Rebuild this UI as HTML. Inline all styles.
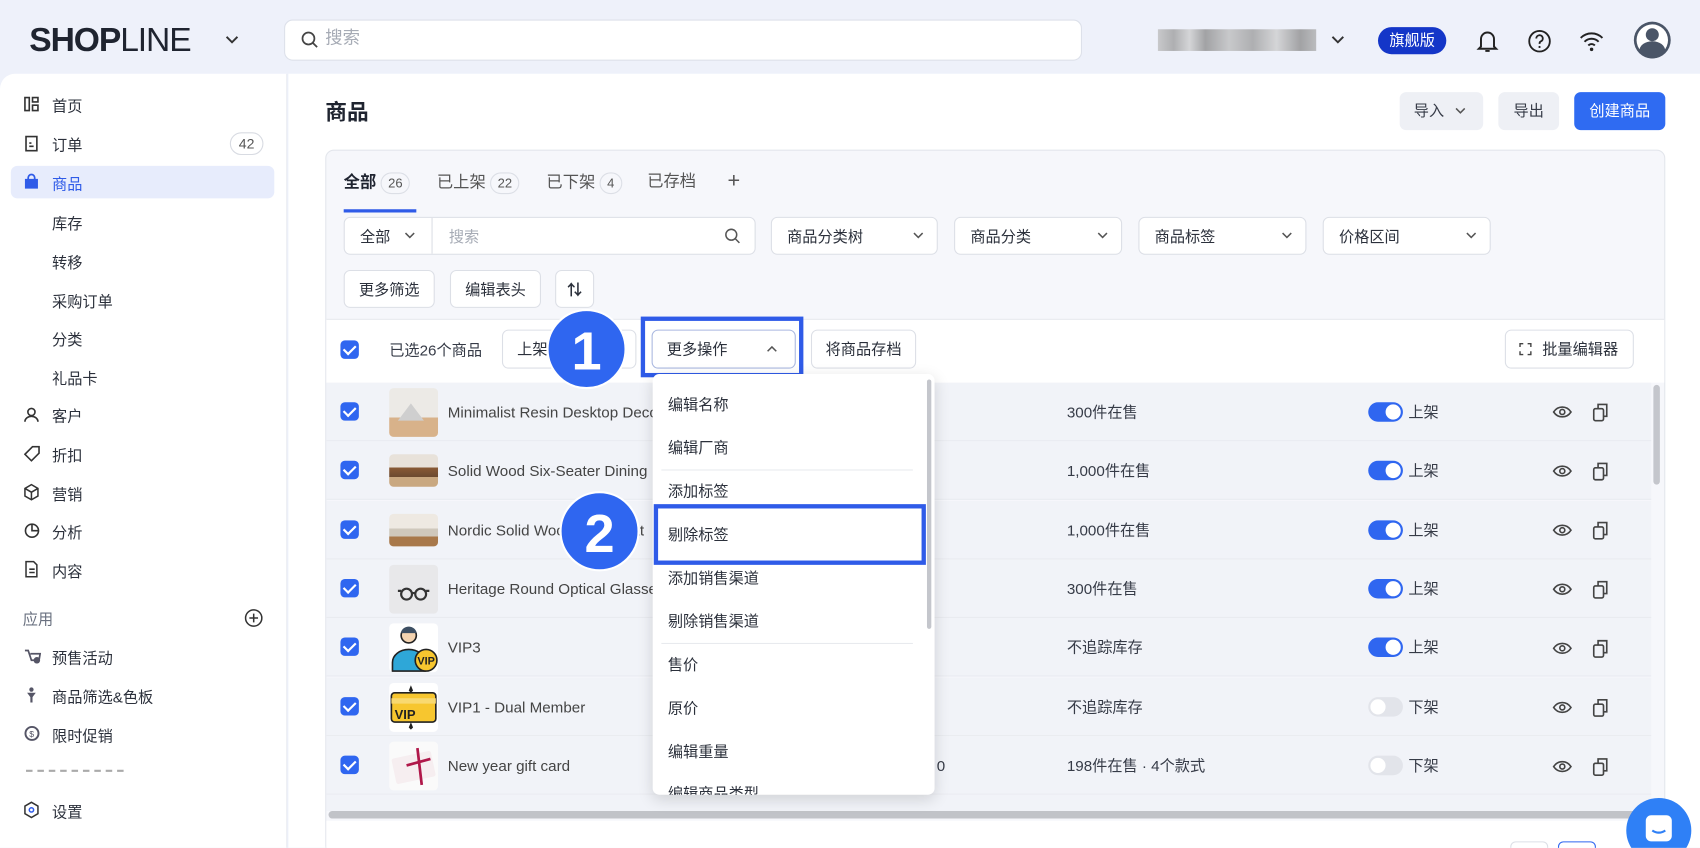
<!DOCTYPE html>
<html><head><meta charset="utf-8">
<style>
*{box-sizing:border-box;margin:0;padding:0}
html,body{width:1700px;height:848px;overflow:hidden;background:#eef1fa}
body{font-family:"Liberation Sans","Noto Sans CJK SC",sans-serif;color:#363b47}
#w{position:absolute;left:0;top:0;width:1568px;height:782px;transform:scale(1.08418);transform-origin:0 0;background:#eef1fa;overflow:hidden}
.a{position:absolute}
.t{position:absolute;font-size:14px;line-height:18px;white-space:nowrap}
.btn{position:absolute;background:#fff;border:1px solid #dcdfe6;border-radius:6px;font-size:14px;display:flex;align-items:center;justify-content:center;color:#2b303b}
.sel{position:absolute;background:#fff;border:1px solid #dcdfe6;border-radius:6px;height:35px;top:200px;font-size:14px;display:flex;align-items:center;padding-left:14px;color:#2b303b}
.sel svg{position:absolute;right:12px;top:13px}
.cb{position:absolute;width:17px;height:17px;border-radius:4px;background:#2f66f0}
.cb:after{content:"";position:absolute;left:5px;top:2px;width:5px;height:9px;border:solid #fff;border-width:0 2px 2px 0;transform:rotate(45deg)}
.side{position:absolute;left:48px;font-size:14px;color:#2b303b}
.ic{position:absolute;left:22px}
.row{position:absolute;left:301px;width:1222px;height:54px;border-bottom:1px solid #e9ebf0;background:#f1f3f8}
.thumb{position:absolute;left:58px;top:5px;width:45px;height:45px;border-radius:4px;overflow:hidden}
.tg{position:absolute;left:961px;top:18px;width:32px;height:18px;border-radius:9px;background:#2f66f0}
.tg:after{content:"";position:absolute;right:2px;top:2px;width:14px;height:14px;border-radius:50%;background:#fff}
.tg.off{background:#e2e4ea}.tg.off:after{left:2px;right:auto}
.mi{position:absolute;left:14px;font-size:14px;color:#2b303b}
.num{position:absolute;width:74px;height:74px;border-radius:50%;background:#2f66f0;color:#fff;font-size:50px;font-weight:bold;text-align:center;line-height:74px;font-family:"Liberation Sans",sans-serif}
.pill{display:inline-block;border:1px solid #dcdfe6;border-radius:10px;font-size:12px;padding:0 6px;line-height:18px;margin-left:4px;color:#555}
</style></head><body><div id="w">
<div class="t" style="left:27px;top:19px;font-size:31px;line-height:36px;color:#1f2430;letter-spacing:-1px"><b>SHOP</b><span style="font-weight:normal">LINE</span></div>
<svg class="a" style="left:207px;top:32px" width="14" height="10"><path d="M2 2l5 5 5-5" stroke="#333" stroke-width="1.8" fill="none"/></svg>
<div class="a" style="left:262px;top:18px;width:736px;height:38px;background:#fff;border:1px solid #dde1ea;border-radius:8px"></div>
<svg class="a" style="left:277px;top:28px" width="18" height="18"><circle cx="7.5" cy="7.5" r="5.5" stroke="#444" stroke-width="1.6" fill="none"/><path d="M11.5 11.5l4 4" stroke="#444" stroke-width="1.6"/></svg>
<div class="t" style="left:300px;top:27px;font-size:16px;color:#a6abb5">搜索</div>
<div class="a" style="left:1068px;top:27px;width:146px;height:20px;background:linear-gradient(90deg,#bbb 0,#999 10%,#ccc 20%,#888 30%,#bbb 45%,#999 60%,#ccc 75%,#888 90%,#aaa 100%);opacity:.75"></div>
<svg class="a" style="left:1227px;top:32px" width="14" height="10"><path d="M2 2l5 5 5-5" stroke="#333" stroke-width="1.8" fill="none"/></svg>
<div class="a" style="left:1271px;top:25px;width:63px;height:25px;border-radius:13px;background:#1436c8;color:#fff;font-size:14px;text-align:center;line-height:25px">旗舰版</div>
<svg class="a" style="left:1361px;top:26px" width="22" height="24"><path d="M5 17V10a6 6 0 0 1 12 0v7l2 2H3z M9 21h4" stroke="#222" stroke-width="1.8" fill="none"/></svg>
<svg class="a" style="left:1409px;top:27px" width="22" height="22"><circle cx="11" cy="11" r="9.5" stroke="#222" stroke-width="1.7" fill="none"/><path d="M8 8.5a3 3 0 1 1 4 2.8c-1 .4-1 1-1 2.2" stroke="#222" stroke-width="1.7" fill="none"/><circle cx="11" cy="16.3" r="1" fill="#222"/></svg>
<svg class="a" style="left:1456px;top:27px" width="24" height="22"><path d="M2 8a14 14 0 0 1 20 0M5.5 11.5a9 9 0 0 1 13 0M9 15a4 4 0 0 1 6 0" stroke="#222" stroke-width="1.8" fill="none"/><circle cx="12" cy="18.5" r="1.6" fill="#222"/></svg>
<svg class="a" style="left:1506px;top:19px" width="36" height="36"><circle cx="18" cy="18" r="17" fill="#4a5567"/><circle cx="18" cy="18" r="14.5" fill="#fff"/><circle cx="18" cy="13" r="6" fill="#4a5567"/><path d="M6 28a12 9 0 0 1 24 0a14 14 0 0 1-24 0z" fill="#4a5567"/></svg>

<div class="a" style="left:0;top:68px;width:265px;height:714px;background:#fff;border-top-left-radius:14px;border-right:1px solid #e6e8ee"></div>
<div class="a" style="left:10px;top:153px;width:243px;height:30px;border-radius:6px;background:#e7ecfc"></div>
<svg class="ic" style="top:89px" width="14" height="14"><path d="M1 1h4v12H1zM8 1h5v4H8zM8 8h5v5H8z" stroke="#333" stroke-width="1.5" fill="none"/></svg>
<div class="side" style="top:88px">首页</div>
<svg class="ic" style="top:125px" width="14" height="15"><path d="M2 1h10v13H2zM5 7h2M5 10h4" stroke="#333" stroke-width="1.5" fill="none"/></svg>
<div class="side" style="top:124px">订单</div>
<div class="a" style="left:212px;top:122px;width:31px;height:21px;border:1px solid #d8dbe2;border-radius:11px;font-size:13px;text-align:center;line-height:19px;color:#555">42</div>
<svg class="ic" style="top:160px" width="14" height="15"><path d="M1 5h12v9H1z" fill="#2f5be8"/><path d="M4 6V4a3 3 0 0 1 6 0v2" stroke="#2f5be8" stroke-width="1.6" fill="none"/></svg>
<div class="side" style="top:160px;color:#2f5be8">商品</div>
<div class="side" style="top:196px">库存</div>
<div class="side" style="top:232px">转移</div>
<div class="side" style="top:268px">采购订单</div>
<div class="side" style="top:303px">分类</div>
<div class="side" style="top:339px">礼品卡</div>
<svg class="ic" style="top:375px" width="14" height="15"><circle cx="7" cy="5" r="3.3" stroke="#333" stroke-width="1.5" fill="none"/><path d="M1 14a6 5 0 0 1 12 0" stroke="#333" stroke-width="1.5" fill="none"/></svg>
<div class="side" style="top:374px">客户</div>
<svg class="ic" style="top:411px" width="15" height="15"><path d="M8 1h6v6l-7 7-6-6z" stroke="#333" stroke-width="1.5" fill="none"/></svg>
<div class="side" style="top:410px">折扣</div>
<svg class="ic" style="top:446px" width="14" height="16"><path d="M7 1l6 3.5v7L7 15 1 11.5v-7zM1 4.5L7 8l6-3.5M7 8v7" stroke="#333" stroke-width="1.4" fill="none"/></svg>
<div class="side" style="top:446px">营销</div>
<svg class="ic" style="top:482px" width="15" height="15"><circle cx="7.5" cy="7.5" r="6" stroke="#333" stroke-width="1.5" fill="none"/><path d="M7.5 1.5v6h6" stroke="#333" stroke-width="1.5" fill="none"/></svg>
<div class="side" style="top:481px">分析</div>
<svg class="ic" style="top:517px" width="14" height="16"><path d="M2 1h7l3 3v11H2zM5 8h5M5 11h5" stroke="#333" stroke-width="1.4" fill="none"/></svg>
<div class="side" style="top:517px">内容</div>
<div class="t" style="left:21px;top:562px;color:#6a7180">应用</div>
<svg class="a" style="left:225px;top:561px" width="18" height="18"><circle cx="9" cy="9" r="7.5" stroke="#333" stroke-width="1.4" fill="none"/><path d="M9 5v8M5 9h8" stroke="#333" stroke-width="1.4"/></svg>
<svg class="ic" style="top:598px" width="16" height="15"><path d="M1 2l3 0 3 9h7l1-6H6" stroke="#556" stroke-width="1.6" fill="none"/><circle cx="12" cy="11" r="3" fill="#556"/></svg>
<div class="side" style="top:597px">预售活动</div>
<svg class="ic" style="top:633px" width="14" height="16"><circle cx="7" cy="3" r="2" fill="#556"/><path d="M3 6h8l-3 4v5H6v-5z" fill="#556"/></svg>
<div class="side" style="top:633px">商品筛选&amp;色板</div>
<svg class="ic" style="top:669px" width="15" height="15"><circle cx="7.5" cy="7.5" r="6" stroke="#556" stroke-width="1.8" fill="none"/><text x="5" y="11" font-size="8" fill="#556">$</text></svg>
<div class="side" style="top:669px">限时促销</div>
<div class="a" style="left:24px;top:710px;width:90px;height:2px;border-top:2px dashed #aaa"></div>
<svg class="ic" style="top:739px" width="14" height="16"><path d="M7 1l6 3.5v7L7 15 1 11.5v-7z" stroke="#333" stroke-width="1.4" fill="none"/><circle cx="7" cy="8" r="2" stroke="#2f5be8" stroke-width="1.4" fill="none"/></svg>
<div class="side" style="top:739px">设置</div>

<div class="a" style="left:266px;top:68px;width:1302px;height:714px;background:#fff"></div>
<div class="t" style="left:300px;top:92px;font-size:20px;line-height:24px;font-weight:bold;color:#1f2430">商品</div>
<div class="a" style="left:1291px;top:85px;width:77px;height:35px;background:#eef0f5;border-radius:6px;font-size:14px;line-height:35px;padding-left:13px">导入</div>
<svg class="a" style="left:1342px;top:99px" width="10" height="7"><path d="M1 1l4 4 4-4" stroke="#555" stroke-width="1.4" fill="none"/></svg>
<div class="a" style="left:1382px;top:85px;width:56px;height:35px;background:#eef0f5;border-radius:6px;font-size:14px;line-height:35px;text-align:center">导出</div>
<div class="a" style="left:1452px;top:85px;width:84px;height:35px;background:#2f6bf2;border-radius:6px;font-size:14px;line-height:35px;text-align:center;color:#fff">创建商品</div>

<div class="a" style="left:300px;top:138px;width:1236px;height:650px;background:#f6f7fb;border:1px solid #e3e6ec;border-radius:8px"></div>
<div class="t" style="left:317px;top:159px;font-size:15px;font-weight:bold;color:#1f2430">全部<span class="pill" style="font-weight:normal">26</span></div>
<div class="a" style="left:317px;top:193px;width:67px;height:3px;background:#2f5be8"></div>
<div class="t" style="left:403px;top:159px;font-size:15px;color:#555">已上架<span class="pill">22</span></div>
<div class="t" style="left:504px;top:159px;font-size:15px;color:#555">已下架<span class="pill">4</span></div>
<div class="t" style="left:597px;top:159px;font-size:15px;color:#555">已存档</div>
<div class="t" style="left:671px;top:158px;font-size:20px;color:#555">+</div>

<div class="sel" style="left:317px;width:380px">全部<span style="position:absolute;left:80px;top:0;height:33px;border-left:1px solid #dcdfe6"></span><span style="position:absolute;left:96px;color:#a6abb5">搜索</span>
<svg style="position:absolute;left:55px;top:13px" width="10" height="7"><path d="M1 1l4 4 4-4" stroke="#555" stroke-width="1.4" fill="none"/></svg>
<svg style="right:12px;top:9px" width="16" height="16"><circle cx="6.5" cy="6.5" r="5" stroke="#555" stroke-width="1.4" fill="none"/><path d="M10 10l4 4" stroke="#555" stroke-width="1.4"/></svg></div>
<div class="sel" style="left:711px;width:154px">商品分类树<svg width="10" height="7"><path d="M1 1l4 4 4-4" stroke="#555" stroke-width="1.4" fill="none"/></svg></div>
<div class="sel" style="left:880px;width:155px">商品分类<svg width="10" height="7"><path d="M1 1l4 4 4-4" stroke="#555" stroke-width="1.4" fill="none"/></svg></div>
<div class="sel" style="left:1050px;width:155px">商品标签<svg width="10" height="7"><path d="M1 1l4 4 4-4" stroke="#555" stroke-width="1.4" fill="none"/></svg></div>
<div class="sel" style="left:1220px;width:155px">价格区间<svg width="10" height="7"><path d="M1 1l4 4 4-4" stroke="#555" stroke-width="1.4" fill="none"/></svg></div>
<div class="btn" style="left:317px;top:249px;width:84px;height:35px">更多筛选</div>
<div class="btn" style="left:415px;top:249px;width:84px;height:35px">编辑表头</div>
<div class="btn" style="left:512px;top:249px;width:36px;height:35px;font-weight:bold">⇅</div>

<div class="a" style="left:301px;top:294px;width:1234px;height:59px;background:#fff;border-top:1px solid #e6e8ee"></div>
<div class="cb" style="left:314px;top:314px"></div>
<div class="t" style="left:359px;top:314px">已选26个商品</div>
<div class="btn" style="left:463px;top:304px;width:124px;height:36px;justify-content:flex-start;padding-left:13px">上架</div>
<div class="btn" style="left:601px;top:304px;width:133px;height:36px;justify-content:flex-start;padding-left:13px;border-color:#aab8e0">更多操作</div>
<svg class="a" style="left:707px;top:318px" width="10" height="7"><path d="M1 6l4-4 4 4" stroke="#555" stroke-width="1.4" fill="none"/></svg>
<div class="a" style="left:591px;top:292px;width:150px;height:56px;border:4px solid #2f5be8"></div>
<div class="btn" style="left:748px;top:304px;width:97px;height:36px">将商品存档</div>
<div class="btn" style="left:1388px;top:304px;width:119px;height:36px;padding-left:20px">批量编辑器</div>
<svg class="a" style="left:1401px;top:316px" width="12" height="12"><path d="M1 4V1h3M8 1h3v3M11 8v3H8M4 11H1V8" stroke="#444" stroke-width="1.3" fill="none"/></svg>

<div class="row" style="top:353px"><div class="cb" style="left:13px;top:18px"></div><div class="thumb" style="background:linear-gradient(#eceae6 60%,#d8b28a 60%)"><div class="a" style="left:8px;top:14px;width:0;height:0;border-left:12px solid transparent;border-right:12px solid transparent;border-bottom:16px solid #cfcfcf"></div></div><div class="t" style="left:112px;top:18px;color:#444">Minimalist Resin Desktop Decor</div><div class="t" style="left:683px;top:18px">300件在售</div><div class="tg"></div><div class="t" style="left:998px;top:18px">上架</div></div>
<div class="row" style="top:407px"><div class="cb" style="left:13px;top:18px"></div><div class="thumb" style="top:12px;height:30px;background:linear-gradient(#e8e2da 40%,#8a5a35 40%,#6b4a30 70%,#c9a880 70%)"></div><div class="t" style="left:112px;top:18px;color:#444">Solid Wood Six-Seater Dining</div><div class="t" style="left:683px;top:18px">1,000件在售</div><div class="tg"></div><div class="t" style="left:998px;top:18px">上架</div></div>
<div class="row" style="top:462px"><div class="cb" style="left:13px;top:18px"></div><div class="thumb" style="top:12px;height:30px;background:linear-gradient(#eee9e2 45%,#cfc8bc 45%,#cfc8bc 70%,#a8784a 70%)"></div><div class="t" style="left:112px;top:18px;color:#444">Nordic Solid Wood Sofa Seat</div><div class="t" style="left:683px;top:18px">1,000件在售</div><div class="tg"></div><div class="t" style="left:998px;top:18px">上架</div></div>
<div class="row" style="top:516px"><div class="cb" style="left:13px;top:18px"></div><div class="thumb" style="background:#e8e8ea"><svg width="45" height="45"><circle cx="16" cy="27" r="5" stroke="#333" stroke-width="2" fill="none"/><circle cx="29" cy="27" r="5" stroke="#333" stroke-width="2" fill="none"/><path d="M21 26h3M8 24h3M34 24h3" stroke="#333" stroke-width="2"/></svg></div><div class="t" style="left:112px;top:18px;color:#444">Heritage Round Optical Glasses</div><div class="t" style="left:683px;top:18px">300件在售</div><div class="tg"></div><div class="t" style="left:998px;top:18px">上架</div></div>
<div class="row" style="top:570px"><div class="cb" style="left:13px;top:18px"></div><div class="thumb" style="background:#fff"><svg width="45" height="45"><circle cx="18" cy="11" r="7" fill="#f3d3b0" stroke="#222" stroke-width="1.5"/><path d="M11 9a7 6 0 0 1 14 0z" fill="#3d4f63"/><path d="M3 44v-8a10 8 0 0 1 30 0v8z" fill="#2ea7d8" stroke="#222" stroke-width="1.5"/><circle cx="34" cy="34" r="10" fill="#f7c62f" stroke="#222" stroke-width="1.5"/><text x="26" y="38" font-size="10" font-weight="bold" fill="#222" font-family="Liberation Sans">VIP</text></svg></div><div class="t" style="left:112px;top:18px;color:#444">VIP3</div><div class="t" style="left:683px;top:18px">不追踪库存</div><div class="tg"></div><div class="t" style="left:998px;top:18px">上架</div></div>
<div class="row" style="top:625px"><div class="cb" style="left:13px;top:18px"></div><div class="thumb" style="background:#fff"><svg width="45" height="45"><rect x="2" y="9" width="41" height="27" rx="3" fill="#f7c62f" stroke="#222" stroke-width="1.5"/><rect x="2" y="14" width="41" height="5" fill="#f9d970"/><text x="5" y="33" font-size="12" font-weight="bold" fill="#222" font-family="Liberation Sans">VIP</text><path d="M20 2l2 5-2 2-2-2zM20 36l2 5-2 2-2-2z" fill="#222"/></svg></div><div class="t" style="left:112px;top:18px;color:#444">VIP1 - Dual Member</div><div class="t" style="left:683px;top:18px">不追踪库存</div><div class="tg off"></div><div class="t" style="left:998px;top:18px">下架</div></div>
<div class="row" style="top:679px"><div class="cb" style="left:13px;top:18px"></div><div class="thumb" style="background:#fafafa"><svg width="45" height="45"><rect x="4" y="12" width="37" height="24" rx="2" fill="#f6eef0" transform="rotate(-12 22 24)"/><path d="M26 6l4 34M16 22l22-6" stroke="#b0184a" stroke-width="2.5"/></svg></div><div class="t" style="left:112px;top:18px;color:#444">New year gift card</div><div class="t" style="left:563px;top:18px">0</div><div class="t" style="left:683px;top:18px">198件在售 · 4个款式</div><div class="tg off"></div><div class="t" style="left:998px;top:18px">下架</div></div>
<div class="row" style="top:733px;height:15px;border:none"></div>
<svg class="a" style="left:1430px;top:370px" width="60" height="350">
<defs><g id="ec"><path d="M3 10c4-6 12-6 16 0c-4 6-12 6-16 0z" stroke="#444" stroke-width="1.5" fill="none"/><circle cx="11" cy="10" r="2.3" stroke="#444" stroke-width="1.5" fill="none"/><rect x="40" y="7" width="9" height="11" rx="1.5" stroke="#444" stroke-width="1.5" fill="none"/><path d="M44 7V3h8v11h-3" stroke="#444" stroke-width="1.5" fill="none"/></g></defs>
<use href="#ec" y="0"/><use href="#ec" y="54.5"/><use href="#ec" y="109"/><use href="#ec" y="163.5"/><use href="#ec" y="218"/><use href="#ec" y="272.5"/>
</svg>
<svg class="a" style="left:1430px;top:697px" width="60" height="22"><use href="#ec"/></svg>
<div class="a" style="left:1525px;top:355px;width:6px;height:92px;border-radius:3px;background:#c4c6cc"></div>
<div class="a" style="left:303px;top:748px;width:1222px;height:7px;border-radius:4px;background:#c1c3c8"></div>
<div class="a" style="left:301px;top:757px;width:1234px;height:30px;background:#fff"></div>
<div class="a" style="left:1393px;top:776px;width:35px;height:20px;border:1px solid #dcdfe6;border-radius:5px"></div>
<div class="a" style="left:1437px;top:776px;width:35px;height:20px;border:1px solid #2f66f0;border-radius:5px"></div>
<div class="a" style="left:1500px;top:736px;width:60px;height:60px;border-radius:50%;background:#2f80f6"></div>
<svg class="a" style="left:1516px;top:750px" width="28" height="30"><rect x="2" y="2" width="24" height="24" rx="5" fill="#fff"/><path d="M8 16q6 4 12 0" stroke="#2f80f6" stroke-width="2" fill="none"/></svg>

<div class="a" style="left:602px;top:345px;width:260px;height:388px;background:#fff;border-radius:6px;box-shadow:0 4px 14px rgba(0,0,0,.14);overflow:hidden">
<div class="mi" style="top:18px">编辑名称</div>
<div class="mi" style="top:58px">编辑厂商</div>
<div class="a" style="left:8px;top:88px;width:232px;height:1px;background:#e8eaee"></div>
<div class="mi" style="top:98px">添加标签</div>
<div class="mi" style="top:138px">剔除标签</div>
<div class="mi" style="top:178px">添加销售渠道</div>
<div class="mi" style="top:218px">剔除销售渠道</div>
<div class="a" style="left:8px;top:248px;width:232px;height:1px;background:#e8eaee"></div>
<div class="mi" style="top:258px">售价</div>
<div class="mi" style="top:298px">原价</div>
<div class="mi" style="top:338px">编辑重量</div>
<div class="mi" style="top:377px">编辑商品类型</div>
<div class="a" style="left:253px;top:5px;width:4px;height:230px;border-radius:2px;background:#c4c6cc"></div>
</div>
<div class="a" style="left:603px;top:465px;width:251px;height:56px;border:4px solid #2f5be8"></div>
<div class="num" style="left:504px;top:285px;border:2px solid #fff">1</div>
<div class="num" style="left:516px;top:453px;border:2px solid #fff">2</div>
</div></body></html>
